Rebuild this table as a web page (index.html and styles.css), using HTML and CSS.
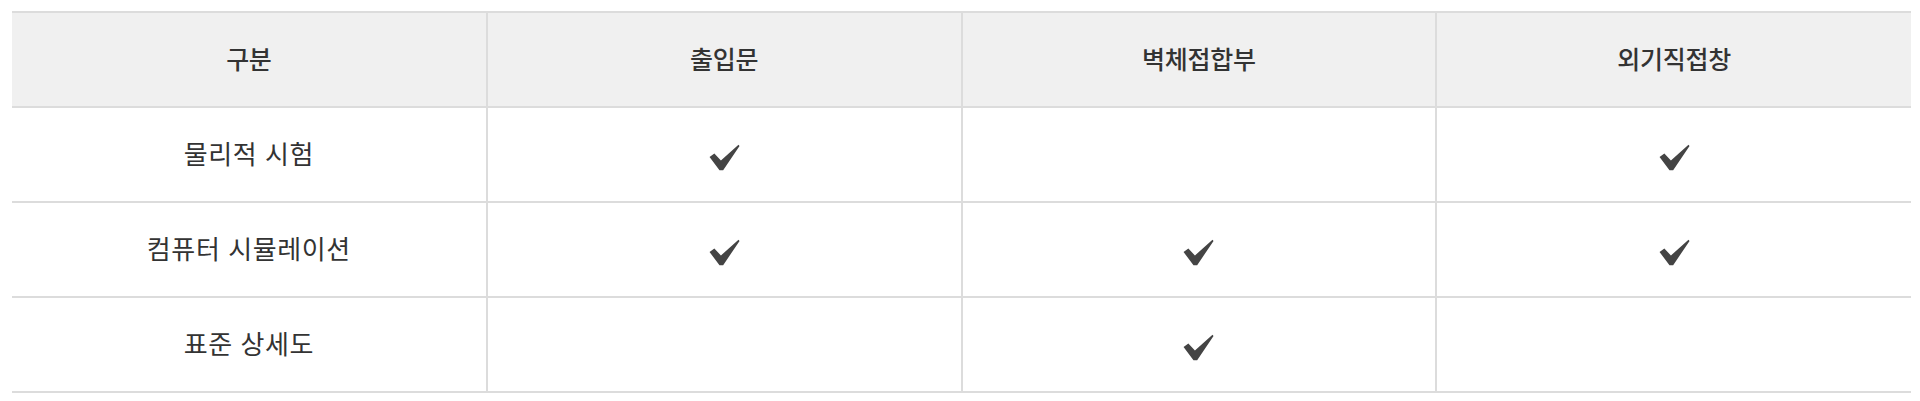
FILE: index.html
```html
<!DOCTYPE html>
<html lang="ko">
<head>
<meta charset="utf-8">
<link rel="stylesheet" href="styles.css">
</head>
<body>
<div class="wrap">
  <table class="grid">
    <thead>
      <tr><th>구분</th><th>출입문</th><th>벽체접합부</th><th>외기직접창</th></tr>
    </thead>
    <tbody>
      <tr>
        <td>물리적 시험</td>
        <td><svg class="chk" viewBox="0 0 32 28"><path d="M0.5 13.5 L5.5 9.8 L12.3 17.2 L30.5 0.8 L31.6 2 L14.6 27.2 L10.8 27.2 Z"/></svg></td>
        <td></td>
        <td><svg class="chk" viewBox="0 0 32 28"><path d="M0.5 13.5 L5.5 9.8 L12.3 17.2 L30.5 0.8 L31.6 2 L14.6 27.2 L10.8 27.2 Z"/></svg></td>
      </tr>
      <tr>
        <td>컴퓨터 시뮬레이션</td>
        <td><svg class="chk" viewBox="0 0 32 28"><path d="M0.5 13.5 L5.5 9.8 L12.3 17.2 L30.5 0.8 L31.6 2 L14.6 27.2 L10.8 27.2 Z"/></svg></td>
        <td><svg class="chk" viewBox="0 0 32 28"><path d="M0.5 13.5 L5.5 9.8 L12.3 17.2 L30.5 0.8 L31.6 2 L14.6 27.2 L10.8 27.2 Z"/></svg></td>
        <td><svg class="chk" viewBox="0 0 32 28"><path d="M0.5 13.5 L5.5 9.8 L12.3 17.2 L30.5 0.8 L31.6 2 L14.6 27.2 L10.8 27.2 Z"/></svg></td>
      </tr>
      <tr>
        <td>표준 상세도</td>
        <td></td>
        <td><svg class="chk" viewBox="0 0 32 28"><path d="M0.5 13.5 L5.5 9.8 L12.3 17.2 L30.5 0.8 L31.6 2 L14.6 27.2 L10.8 27.2 Z"/></svg></td>
        <td></td>
      </tr>
    </tbody>
  </table>
</div>
</body>
</html>
```
FILE: styles.css
```css
html, body {
  margin: 0;
  padding: 0;
  background: #fff;
}
.wrap {
  padding: 11px 9px 0 12px;
}
.grid {
  width: 100%;
  border-collapse: collapse;
  table-layout: fixed;
  border-top: 2px solid #dcdcdc;
  font-family: "Noto Sans CJK KR", "Noto Sans", sans-serif;
  color: #333;
}
.grid th, .grid td {
  height: 89px;
  padding: 0 0 4px 0;
  text-align: center;
  vertical-align: middle;
  border-bottom: 2px solid #dcdcdc;
  border-left: 2px solid #dcdcdc;
}
.grid th:first-child, .grid td:first-child {
  border-left: none;
}
.grid th {
  background: #f0f0f0;
  font-size: 25px;
  font-weight: 500;
  letter-spacing: -0.3px;
}
.grid td {
  font-size: 26px;
  font-weight: 400;
  letter-spacing: 0.6px;
}
.chk {
  display: inline-block;
  width: 31px;
  height: 27px;
  fill: #444;
  vertical-align: middle;
  margin-top: 2px;
}
```
